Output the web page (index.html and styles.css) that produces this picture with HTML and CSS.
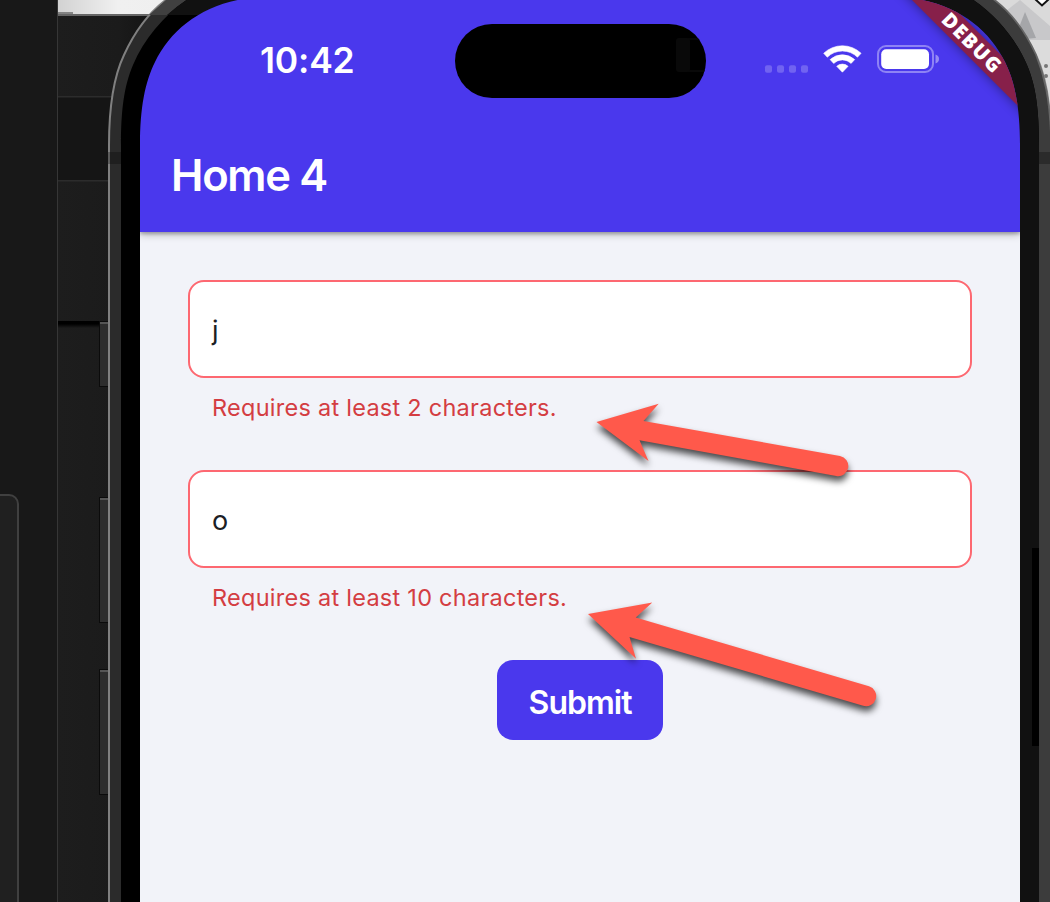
FILE: index.html
```html
<!DOCTYPE html>
<html lang="en">
<head>
<meta charset="utf-8">
<title>Home 4</title>
<link rel="stylesheet" href="styles.css">
</head>
<body>
<div class="desktop">
  <svg class="backdrop" viewBox="0 0 1050 902" aria-hidden="true">
    <defs>
      <linearGradient id="wall" x1="0" x2="1" y1="0" y2="0"><stop offset="0" stop-color="#d2d2d2"/><stop offset=".4" stop-color="#f0f0f0"/><stop offset="1" stop-color="#eeeeee"/></linearGradient>
      <linearGradient id="shade" x1="0" x2="0" y1="0" y2="1"><stop offset="0" stop-color="#000"/><stop offset=".4" stop-color="#000"/><stop offset="1" stop-color="#1c1c1c"/></linearGradient>
      <linearGradient id="pane" x1="0" x2="1" y1="0" y2="0"><stop offset="0" stop-color="#1d1d1d"/><stop offset=".6" stop-color="#1b1b1b"/><stop offset="1" stop-color="#131313"/></linearGradient>
    </defs>
    <!-- windows behind the phone -->
    <rect width="1050" height="902" fill="#181818"/>
    <rect x="58" y="0" width="150" height="14" fill="url(#wall)"/>
    <rect x="58" y="12.5" width="15" height="1" fill="#333"/>
    <rect x="58" y="14" width="92" height="2" fill="#666"/>
    <rect x="58" y="16" width="100" height="886" fill="url(#pane)"/>
    <rect x="58" y="97" width="54" height="84" fill="#151515"/>
    <rect x="58" y="96" width="54" height="1.5" fill="#2c2c2c"/>
    <rect x="58" y="180" width="54" height="1.5" fill="#2c2c2c"/>
    <rect x="58" y="321" width="50" height="7" fill="url(#shade)"/>
    <rect x="57" y="0" width="1" height="902" fill="#363636"/>
    <rect x="-20" y="495" width="38" height="440" rx="9" fill="#202020" stroke="#404040" stroke-width="2"/>
    <rect x="950" y="0" width="100" height="170" fill="#dcdcdc"/>
    <rect x="980" y="0" width="70" height="40" fill="#dadada"/>
    <path d="M1001 15L1020 0L1050 26V40H1015Z" fill="#c8c8ca"/>
    <path d="M1014 40L1025 12L1036 38Z" fill="#a5a6a9"/>
    <path d="M1035 -1L1042 5.5L1049 -1" fill="#fff" stroke="#111" stroke-width="2"/>
    <circle cx="1046" cy="66" r="2" fill="#777"/><circle cx="1046" cy="76" r="2" fill="#777"/>
    <!-- side buttons -->
    <g fill="#2d2d2d" stroke="#0b0b0b"><rect x="99.500" y="321.500" width="14" height="65"/><rect x="99.500" y="497.500" width="14" height="125"/><rect x="99.500" y="669.500" width="14" height="125"/></g>
    <g fill="#555"><rect x="100" y="322" width="9" height="2"/><rect x="100" y="498" width="9" height="2"/><rect x="100" y="670" width="9" height="2"/></g>
    <!-- phone frame -->
    <path d="M109 910V145C109 108 114 76 124 55C134 33 148 13 167 -1H993C1012 13 1026 33 1036 55C1046 76 1051 108 1051 145V910Z" fill="#2b2b2b" stroke="#808080" stroke-width="2"/>
    <path d="M149 15L167 -1H188L167 15Z" fill="#404040"/>
    <path d="M970 -1H993C1012 13 1026 33 1036 55C1045 75 1050 100 1051 145V902H1036V145Z" fill="#3c3c3c"/>
    <path d="M993 -1C1012 13 1026 33 1036 55C1044 75 1050 98 1051 140" fill="none" stroke="#666" stroke-width="1.500"/>
    <path d="M108 152H121V164H108ZM1039 152H1050V164H1039Z" fill="#000" fill-opacity=".28"/>
    <path d="M121 910V145C121 110 124 86 133 65C144 39 164 15 188 -1H972C996 15 1016 39 1027 65C1036 86 1039 110 1039 145V910Z" fill="#000"/>
    <path d="M167 15Q177 6 188 -1H260V15ZM880 -1H972C996 15 1016 39 1027 65C1036 86 1039 110 1039 145V910H1000V100Z" fill="#111"/>
    <path d="M1032 548H1039V746H1032Z" fill="#000"/>
  </svg>

  <main class="screen">
    <header class="app-bar">
      <div class="status">
        <time class="clock">10:42</time>
        <div class="island">
          <svg class="island-mark" viewBox="0 0 30 36" aria-hidden="true"><rect x="1" y="1" width="40" height="32" rx="3" fill="none" stroke="#090909" stroke-width="2"/><rect x="0" y="0" width="14" height="34" rx="3" fill="#090909"/></svg>
        </div>
        <svg class="indicators" viewBox="0 0 176 32" aria-hidden="true">
          <g fill="#fff" fill-opacity=".22"><rect x="1" y="22.200" width="7" height="7.500" rx="2"/><rect x="13" y="22.200" width="7" height="7.500" rx="2"/><rect x="25" y="22.200" width="7" height="7.500" rx="2"/><rect x="37" y="22.200" width="7" height="7.500" rx="2"/></g>
          <path d="M59.700 10.300A27 27 0 0 1 97.100 10.300L93.500 14.200A21.500 21.500 0 0 0 63.300 14.200ZM66.100 16.600A18 18 0 0 1 90.700 16.600L87.100 20.400A12.500 12.500 0 0 0 69.700 20.400ZM72.700 23.300A8.500 8.500 0 0 1 84.100 23.300L78.400 29.200Z" fill="#fff" stroke="#fff" stroke-width=".6" stroke-linejoin="round"/>
          <rect x="114" y="3" width="55" height="26" rx="8" fill="none" stroke="#fff" stroke-opacity=".38" stroke-width="2"/>
          <rect x="117.200" y="6.200" width="47.800" height="19.800" rx="5" fill="#fff"/>
          <path d="M171.500 11.500C176.200 12.500 176.200 19.500 171.500 20.500Z" fill="#fff" fill-opacity=".42"/>
        </svg>
      </div>
      <h1 class="title">Home 4</h1>
    </header>

    <form class="form" onsubmit="return false">
      <div class="field">
        <div class="input">j</div>
        <div class="error">Requires at least 2 characters.</div>
      </div>
      <div class="field">
        <div class="input">o</div>
        <div class="error">Requires at least 10 characters.</div>
      </div>
      <button class="submit" type="button">Submit</button>
    </form>
    <div class="ribbon"><span>DEBUG</span></div>
  </main>

  <svg class="arrows" viewBox="0 0 1050 902" aria-hidden="true">
    <path d="M596.500 422L658.700 403.700L643.500 421L840 456A10 10 0 0 1 836.300 476L639.500 440.200L648.500 461Z"/>
    <path d="M588 614L652.300 602.500L635.700 617.500L869 686.300A10 10 0 0 1 863.200 705.700L629.500 637L636 658.700Z"/>
  </svg>
</div>
</body>
</html>
```
FILE: styles.css
```css
* { box-sizing: border-box; }
body { margin: 0; background: #181818; font-family: Inter, "Liberation Sans", sans-serif; }

.desktop { position: relative; width: 1050px; height: 902px; overflow: hidden; padding: 0 30px 0 140px; }
.backdrop, .arrows { position: absolute; left: 0; top: 0; width: 1050px; height: 902px; pointer-events: none; }
.arrows path { fill: #ff594b; filter: drop-shadow(0 5px 3.5px rgba(0, 0, 0, .7)); }

.screen {
  position: relative;
  display: flex;
  flex-direction: column;
  width: 880px;
  height: 902px;
  clip-path: path("M0 902V145C0 108 5 82 15 62C30 31 60 6 103 -1H777C820 6 850 31 865 62C875 82 880 108 880 145V902Z");
}

.app-bar { position: relative; z-index: 1; flex: none; height: 232px; background: #4a38ed; color: #fff; box-shadow: 0 2px 8px rgba(0, 0, 0, .3), 0 2px 3px rgba(0, 0, 0, .2); }
.status { display: flex; align-items: flex-start; height: 120px; padding: 24px 80px 0 120px; }
.clock { width: 194.500px; padding-top: 15px; font-size: 35.500px; line-height: 44px; font-weight: 600; letter-spacing: -.2px; }
.island { width: 251px; height: 74px; border-radius: 37px; background: #000; overflow: hidden; display: flex; justify-content: flex-end; padding-top: 14px; }
.island-mark { width: 30px; height: 36px; }
.indicators { width: 176px; height: 32px; margin: 19px 0 0 58px; flex: none; }
.title { margin: 0; padding: 28px 31px 0; font-size: 43.500px; line-height: 54px; font-weight: 600; letter-spacing: -1.300px; }

.form { flex: 1; display: flex; flex-direction: column; padding: 48px 48px 0; background: #f2f3f9; }
.field { height: 190px; }
.input { height: 98px; padding: 0 22px; border: 2px solid #fd6871; border-radius: 16px; background: #fff; color: #1b2024; font-size: 27px; line-height: 98px; }
.error { padding: 14px 24px 0; color: #d43d42; font-size: 23.500px; line-height: 32px; letter-spacing: .260px; white-space: nowrap; }
.submit { align-self: center; width: 166px; height: 80px; padding: 5px 0 0; border: 0; border-radius: 16px; background: #4a38ed; color: #fff; font: 600 32px/40px Inter, "Liberation Sans", sans-serif; letter-spacing: -1px; }

.ribbon {
  position: absolute;
  z-index: 2;
  left: 722px;
  top: 31px;
  width: 220px;
  height: 24px;
  display: flex;
  align-items: center;
  justify-content: center;
  transform: rotate(45deg);
  background: #87204a;
  color: #fff;
  box-shadow: 0 0 12px rgba(0, 0, 0, .45);
  font: 800 20px/24px "Open Sans", sans-serif;
  letter-spacing: 1.400px;
}
```
